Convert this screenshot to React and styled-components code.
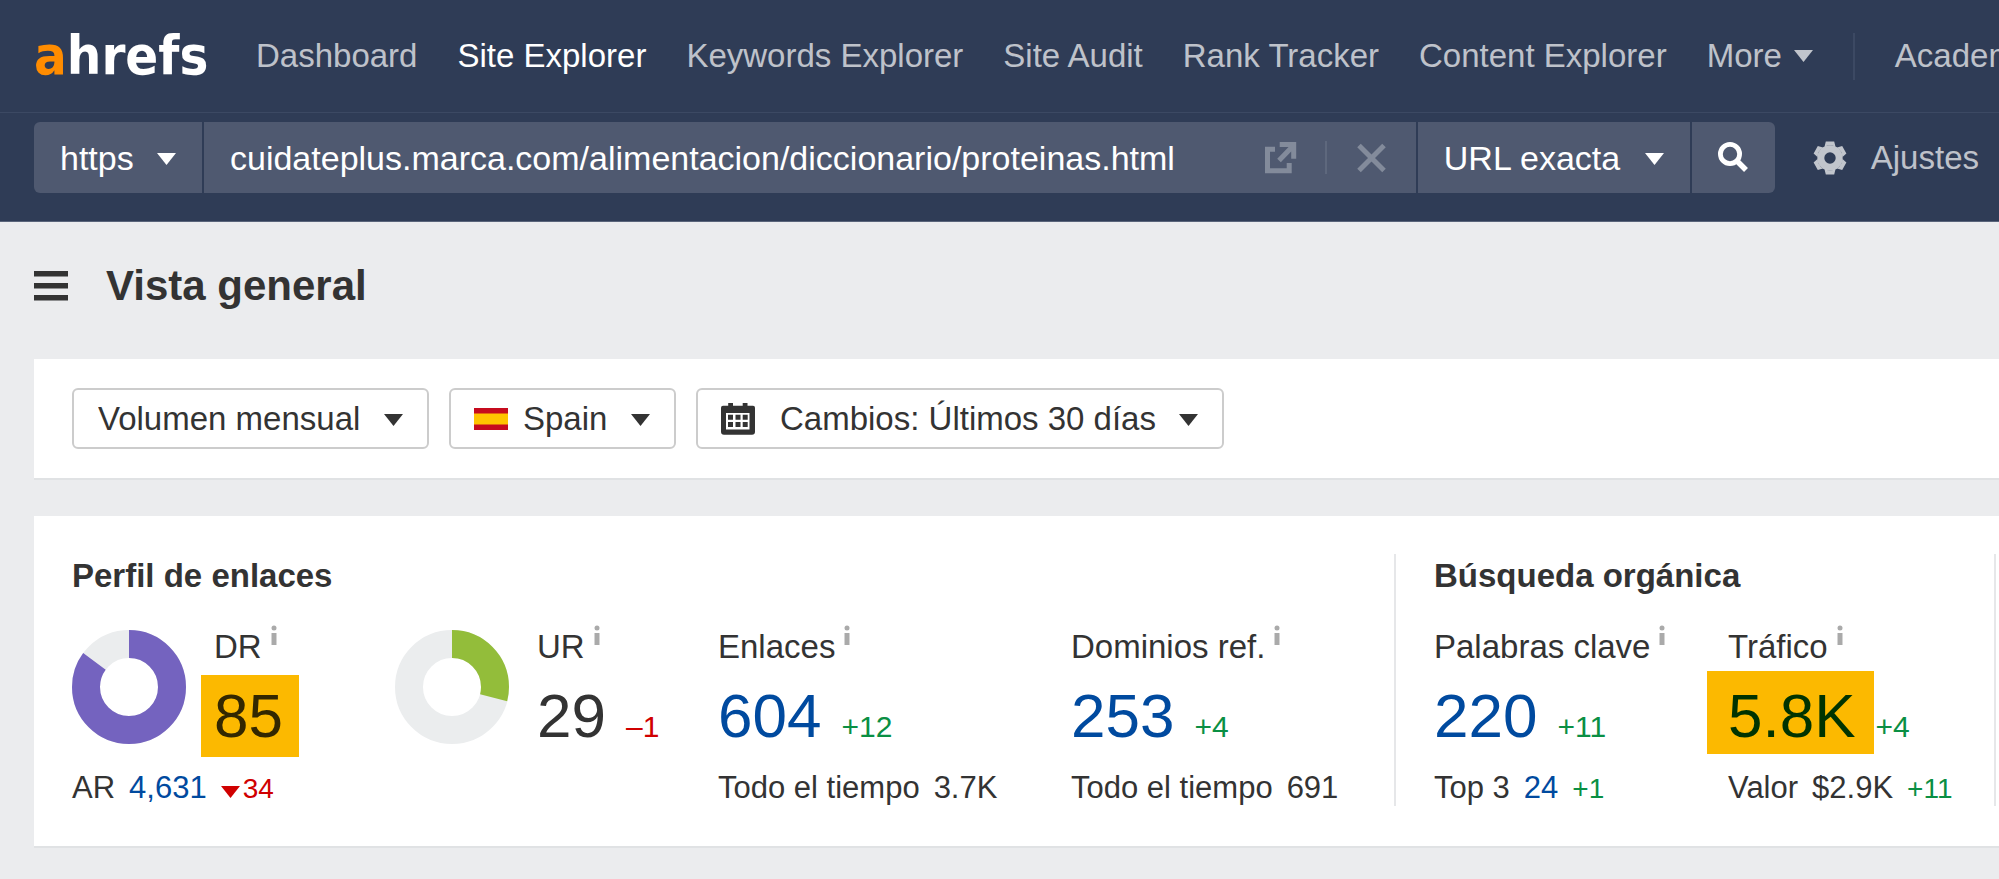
import React, { useState } from "react";
import styled, { createGlobalStyle, css } from "styled-components";

const navItems = [
  "Dashboard",
  "Site Explorer",
  "Keywords Explorer",
  "Site Audit",
  "Rank Tracker",
  "Content Explorer"
];

const App = () => {
  const [url, setUrl] = useState(
    "cuidateplus.marca.com/alimentacion/diccionario/proteinas.html"
  );

  return (
    <>
      <GlobalStyle />
      <Header>
        <TopNav>
          <Logo href="#">
            <LogoAccent>a</LogoAccent>hrefs
          </Logo>
          {navItems.map(item => (
            <NavLink key={item} href="#" $active={item === "Site Explorer"}>
              {item}
            </NavLink>
          ))}
          <MoreButton type="button">
            More
            <Caret />
          </MoreButton>
          <NavDivider />
          <NavLink href="#">Academy</NavLink>
        </TopNav>
        <SearchRow>
          <SearchBar onSubmit={e => e.preventDefault()}>
            <BarDropdown label="Protocolo" value="https" />
            <UrlField>
              <UrlInput
                aria-label="URL"
                value={url}
                onChange={e => setUrl(e.currentTarget.value)}
              />
              <FieldButton type="button" aria-label="Abrir enlace">
                <ExternalIcon />
              </FieldButton>
              <FieldDivider />
              <FieldButton
                type="button"
                aria-label="Borrar"
                onClick={() => setUrl("")}
              >
                <CloseIcon />
              </FieldButton>
            </UrlField>
            <BarDropdown label="Modo" value="URL exacta" />
            <SearchButton type="submit" aria-label="Buscar">
              <SearchIcon />
            </SearchButton>
          </SearchBar>
          <SettingsButton type="button">
            <GearIcon />
            Ajustes
          </SettingsButton>
        </SearchRow>
      </Header>

      <Main>
        <TitleRow>
          <MenuButton type="button" aria-label="Menú">
            <MenuIcon />
          </MenuButton>
          <Title>Vista general</Title>
        </TitleRow>

        <FilterPanel>
          <FilterDropdown label="Volumen" value="Volumen mensual" />
          <FilterDropdown
            label="País"
            value="Spain"
            icon={<FlagIcon />}
            inset={72}
          />
          <FilterDropdown
            label="Periodo"
            value="Cambios: Últimos 30 días"
            icon={<CalendarIcon />}
            inset={82}
          />
        </FilterPanel>

        <StatsPanel>
          <Group>
            <GroupTitle>Perfil de enlaces</GroupTitle>
            <LinkMetrics>
              <div>
                <ChartMetric>
                  <Donut percent={85} color="#7463bf" />
                  <div>
                    <MetricLabel text="DR" />
                    <ValueRow>
                      <Value $tone="#332700">
                        <Highlight>85</Highlight>
                      </Value>
                    </ValueRow>
                  </div>
                </ChartMetric>
                <Footer>
                  AR
                  <FooterLink href="#">4,631</FooterLink>
                  <Drop>
                    <Caret />
                    34
                  </Drop>
                </Footer>
              </div>
              <ChartMetric>
                <Donut percent={29} color="#93bd3a" />
                <div>
                  <MetricLabel text="UR" />
                  <ValueRow>
                    <Value>29</Value>
                    <Delta $negative>–1</Delta>
                  </ValueRow>
                </div>
              </ChartMetric>
              <div>
                <MetricLabel text="Enlaces" />
                <ValueRow>
                  <ValueLink href="#">604</ValueLink>
                  <Delta>+12</Delta>
                </ValueRow>
                <Footer>
                  Todo el tiempo <span>3.7K</span>
                </Footer>
              </div>
              <div>
                <MetricLabel text="Dominios ref." />
                <ValueRow>
                  <ValueLink href="#">253</ValueLink>
                  <Delta>+4</Delta>
                </ValueRow>
                <Footer>
                  Todo el tiempo <span>691</span>
                </Footer>
              </div>
            </LinkMetrics>
          </Group>

          <Group>
            <GroupTitle>Búsqueda orgánica</GroupTitle>
            <SearchMetrics>
              <div>
                <MetricLabel text="Palabras clave" />
                <ValueRow>
                  <ValueLink href="#">220</ValueLink>
                  <Delta>+11</Delta>
                </ValueRow>
                <Footer>
                  Top 3<FooterLink href="#">24</FooterLink>
                  <SmallDelta>+1</SmallDelta>
                </Footer>
              </div>
              <div>
                <MetricLabel text="Tráfico" />
                <ValueRow>
                  <ValueLink href="#" $tone="#003300">
                    <Highlight $wide>5.8K</Highlight>
                  </ValueLink>
                  <Delta>+4</Delta>
                </ValueRow>
                <Footer>
                  Valor <span>$2.9K</span>
                  <SmallDelta>+11</SmallDelta>
                </Footer>
              </div>
            </SearchMetrics>
          </Group>
        </StatsPanel>
      </Main>
    </>
  );
};

const BarDropdown = ({ label, value }) => (
  <BarSelectWrap>
    <BarSelect aria-label={label} defaultValue={value}>
      <option>{value}</option>
    </BarSelect>
    <SelectCaret />
  </BarSelectWrap>
);

const FilterDropdown = ({ label, value, icon, inset }) => (
  <SelectWrap>
    {icon && <SelectIcon>{icon}</SelectIcon>}
    <FilterSelect aria-label={label} defaultValue={value} $inset={inset}>
      <option>{value}</option>
    </FilterSelect>
    <SelectCaret />
  </SelectWrap>
);

const MetricLabel = ({ text }) => (
  <Label>
    {text}
    <InfoIcon />
  </Label>
);

const Donut = ({ percent, color }) => {
  // ring radius is the middle of the band
  const length = 2 * Math.PI * 43;
  return (
    <DonutSvg viewBox="0 0 114 114">
      <circle cx="57" cy="57" r="43" stroke="#ebedee" />
      <circle
        cx="57"
        cy="57"
        r="43"
        stroke={color}
        strokeDasharray={`${(length * percent) / 100} ${length}`}
        transform="rotate(-90 57 57)"
      />
    </DonutSvg>
  );
};

const Caret = ({ className }) => (
  <svg
    className={className}
    width="19"
    height="12"
    viewBox="0 0 19 12"
    fill="currentColor"
  >
    <path d="M0 0h19L9.5 12z" />
  </svg>
);

const InfoIcon = () => (
  <InfoSvg width="6" height="20" viewBox="0 0 6 20">
    <circle cx="3" cy="3" r="2.5" />
    <path d="M0.5 8h5v12h-5z" />
  </InfoSvg>
);

const ExternalIcon = () => (
  <svg width="32" height="32" viewBox="0 0 32 32" fill="none">
    <path
      d="M10 7.2H2.5v21.6h21.7V21M14 18.5L28 4M14.7 2.5h14v14.2"
      stroke="currentColor"
      strokeWidth="5"
    />
  </svg>
);

const CloseIcon = () => (
  <svg width="29" height="30" viewBox="0 0 29 30" fill="none">
    <path d="M2 2.500l25 25M27 2.500l-25 25" stroke="currentColor" strokeWidth="5" />
  </svg>
);

const SearchIcon = () => (
  <svg width="31" height="31" viewBox="0 0 31 31" fill="none">
    <circle cx="12" cy="12" r="9.600" stroke="currentColor" strokeWidth="4.800" />
    <path d="M18 18l10 10" stroke="currentColor" strokeWidth="5.500" />
  </svg>
);

const GearIcon = () => (
  <svg width="34" height="34" viewBox="-17 -17 34 34">
    <circle r="9.200" fill="none" stroke="currentColor" strokeWidth="7" />
    {[0, 60, 120, 180, 240, 300].map(angle => (
      <path
        key={angle}
        fill="currentColor"
        d="M-5.500-11.300L-4.200-16.500H4.200L5.500-11.300Q0-14 -5.500-11.300z"
        transform={`rotate(${angle})`}
      />
    ))}
  </svg>
);

const MenuIcon = () => (
  <svg width="34" height="30" viewBox="0 0 34 30" fill="currentColor">
    <path d="M0 0h34v5.500H0zM0 12h34v5.500H0zM0 24h34v5.500H0z" />
  </svg>
);

const FlagIcon = () => (
  <svg width="34" height="22" viewBox="0 0 34 22">
    <path fill="#c60b1e" d="M0 0h34v22H0z" />
    <path fill="#ffc400" d="M0 5.500h34v11H0z" />
  </svg>
);

const CalendarIcon = () => (
  <svg width="34" height="32" viewBox="0 0 34 32">
    <path
      fill="currentColor"
      d="M2 2.700h5.200V0H12v2.700h9.700V0h4.800v2.700H32q2 0 2 2v24q0 3-3 3H3q-3 0-3-3V4.700q0-2 2-2z"
    />
    <path fill="#fff" d="M5 10h23.500v16.500H5z" />
    <path
      fill="currentColor"
      d="M7 11.700h5v5H7zM14.500 11.700h5v5h-5zM21.700 11.700h5v5h-5zM7 19h5v5H7zM14.500 19h5v5h-5zM21.700 19h5v5h-5z"
    />
  </svg>
);

const GlobalStyle = createGlobalStyle`
  * {
    box-sizing: border-box;
  }

  body {
    margin: 0;
    overflow-x: hidden;
    background-color: #ebecee;
    color: #333;
    font-family: "Liberation Sans", Arial, sans-serif;
    font-size: 33px;
    line-height: 40px;
  }

  a {
    text-decoration: none;
  }

  button,
  input,
  select {
    margin: 0;
    padding: 0;
    border: 0;
    background: none;
    color: inherit;
    font: inherit;
  }

  svg {
    display: block;
    flex: none;
  }
`;

const Header = styled.header`
  overflow: hidden;
  background-color: #2f3c56;
  color: rgba(255, 255, 255, 0.7);
  white-space: nowrap;
  border-bottom: 1px solid #59647a;
`;

const TopNav = styled.nav`
  display: flex;
  align-items: center;
  gap: 40px;
  height: 113px;
  padding-left: 34px;
  border-bottom: 1px solid #3c4963;
`;

const Logo = styled.a`
  flex: none;
  width: 182px;
  color: white;
  font-family: "DejaVu Sans Condensed", "DejaVu Sans", sans-serif;
  font-size: 54px;
  font-weight: bold;
`;

const LogoAccent = styled.span`
  color: #ff8c00;
`;

const NavLink = styled.a`
  color: ${({ $active }) => ($active ? "white" : "inherit")};
`;

const MoreButton = styled.button`
  display: flex;
  align-items: center;
  gap: 12px;
`;

const NavDivider = styled.span`
  flex: none;
  width: 2px;
  height: 47px;
  background-color: #3c4963;
`;

const SearchRow = styled.div`
  display: flex;
  align-items: center;
  gap: 38px;
  padding: 9px 20px 28px 34px;
`;

const SearchBar = styled.form`
  display: flex;
  flex: 1;
  gap: 2px;
  height: 71px;
  border-radius: 6px;
  overflow: hidden;
  color: white;
  font-size: 34px;

  & > * {
    background-color: #4f5970;
  }
`;

const SelectWrap = styled.div`
  position: relative;
`;

const BarSelectWrap = styled(SelectWrap)`
  display: flex;
`;

const BarSelect = styled.select`
  appearance: none;
  padding: 0 68px 0 26px;
`;

const SelectCaret = styled(Caret)`
  position: absolute;
  top: 50%;
  right: 26px;
  margin-top: -5px;
  pointer-events: none;
`;

const UrlField = styled.div`
  display: flex;
  flex: 1;
  align-items: center;
  padding: 0 30px 0 26px;
`;

const UrlInput = styled.input`
  flex: 1;
  min-width: 0;
  outline: none;
`;

const FieldButton = styled.button`
  color: #838b9b;
`;

const FieldDivider = styled.span`
  width: 2px;
  height: 33px;
  margin: 0 30px 0 28px;
  background-color: #5e687d;
`;

const SearchButton = styled.button`
  padding: 0 26px;
`;

const SettingsButton = styled.button`
  display: flex;
  align-items: center;
  gap: 24px;
`;

const Main = styled.main`
  padding-left: 34px;
  overflow: hidden;
`;

const TitleRow = styled.div`
  display: flex;
  align-items: center;
  gap: 38px;
  padding: 40px 0 49px;
`;

const MenuButton = styled.button`
  color: #333;
`;

const Title = styled.h1`
  margin: 0;
  font-size: 42px;
  line-height: 48px;
`;

const Panel = styled.section`
  display: flex;
  margin-bottom: 38px;
  background-color: white;
  box-shadow: 0 2px 0 #e0e2e4;
  white-space: nowrap;
`;

const FilterPanel = styled(Panel)`
  gap: 20px;
  padding: 29px 38px;
`;

const FilterSelect = styled.select`
  appearance: none;
  display: block;
  height: 61px;
  padding: 0 66px 0 ${({ $inset = 24 }) => $inset}px;
  border: 2px solid #ccc;
  border-radius: 6px;
`;

const SelectIcon = styled.span`
  position: absolute;
  top: 0;
  bottom: 0;
  left: 25px;
  display: flex;
  align-items: center;
  pointer-events: none;
`;

const StatsPanel = styled(Panel)`
  padding: 38px 0 40px 38px;
`;

const Group = styled.section`
  flex: none;
  padding: 2px 0 0;
  border-right: 2px solid #e6e7e9;

  & + & {
    padding-left: 38px;
  }
`;

const GroupTitle = styled.h2`
  margin: 0 0 31px;
  font-size: 33px;
`;

const LinkMetrics = styled.div`
  display: grid;
  grid-template-columns: 323px 323px 353px 323px;
`;

const SearchMetrics = styled.div`
  display: grid;
  grid-template-columns: 294px 266px;
`;

const ChartMetric = styled.div`
  display: flex;
  align-items: flex-start;
  gap: 28px;
`;

const DonutSvg = styled.svg`
  width: 114px;
  height: 114px;
  margin-top: 3px;
  fill: none;
  stroke-width: 28px;
`;

const Label = styled.div`
  display: flex;
  gap: 9px;
`;

const InfoSvg = styled.svg`
  margin-top: -2px;
  fill: #aaa;
`;

const ValueRow = styled.div`
  display: flex;
  align-items: baseline;
  gap: 20px;
  height: 72px;
  margin-top: 13px;
`;

const valueStyles = css`
  font-size: 62px;
  line-height: 72px;
`;

const Value = styled.span`
  ${valueStyles}
  color: ${({ $tone = "#333" }) => $tone};
`;

const ValueLink = styled.a`
  ${valueStyles}
  color: ${({ $tone = "#004a9f" }) => $tone};
`;

// marker block behind a number, wider than the number itself
const Highlight = styled.mark`
  position: relative;
  z-index: 0;
  background: none;
  color: inherit;

  &::before {
    content: "";
    position: absolute;
    z-index: -1;
    inset: ${({ $wide }) =>
      $wide ? "-10px -18px -4px -21px" : "-6px -16px -7px -13px"};
    background-color: #fcb900;
  }
`;

const Delta = styled.span`
  color: ${({ $negative }) => ($negative ? "#d00000" : "#0a8f43")};
  font-size: 30px;
  line-height: 36px;
`;

const SmallDelta = styled(Delta)`
  font-size: 28px;
`;

const Footer = styled.div`
  display: flex;
  align-items: baseline;
  gap: 14px;
  height: 36px;
  margin-top: 18px;
  font-size: 31px;
  line-height: 36px;
`;

const FooterLink = styled.a`
  color: #004a9f;
`;

const Drop = styled(SmallDelta).attrs({ $negative: true })`
  display: flex;
  align-items: baseline;
  gap: 3px;
`;

export default App;
